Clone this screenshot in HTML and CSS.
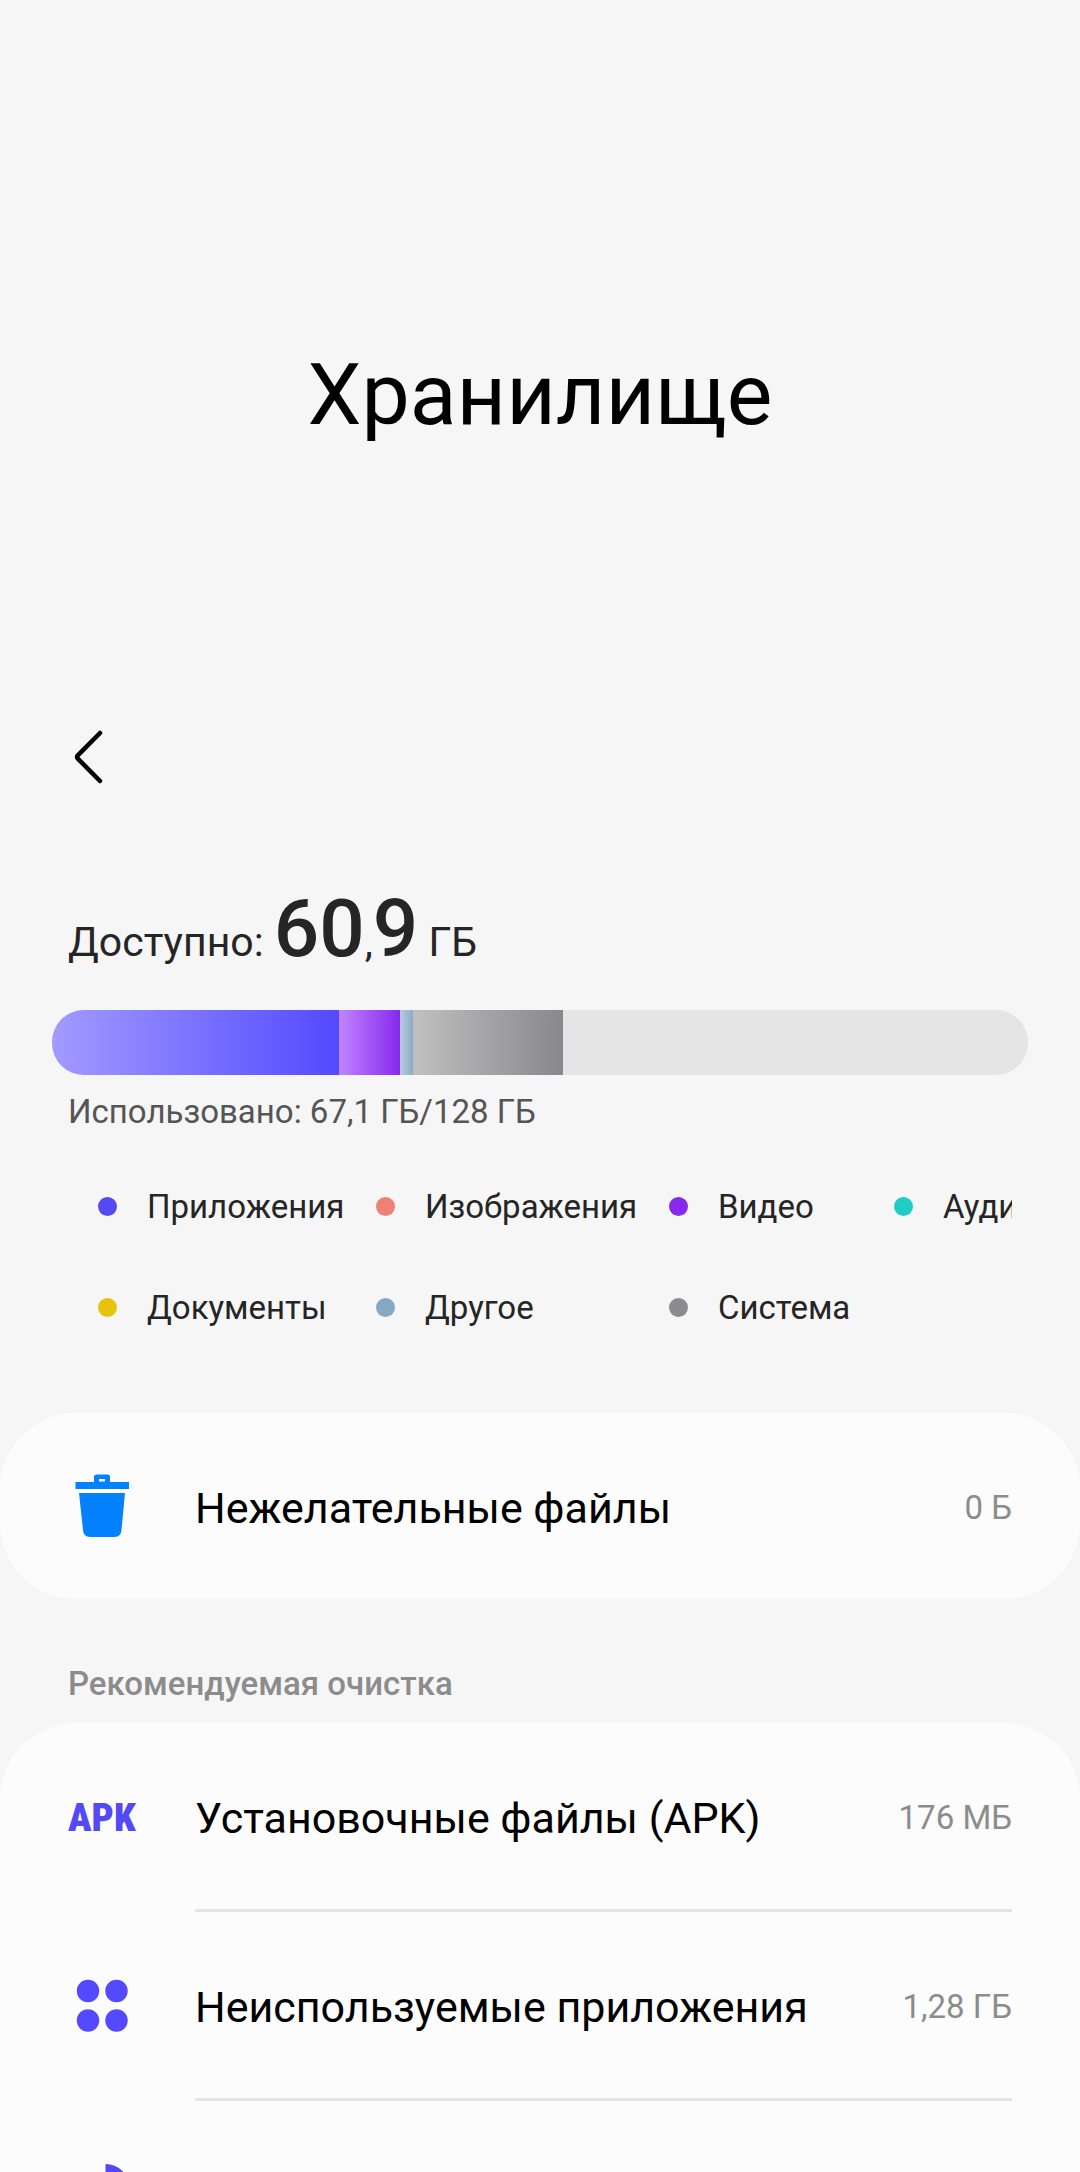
FILE: index.html
```html
<!DOCTYPE html>
<html lang="ru">
<head>
<meta charset="utf-8">
<meta name="viewport" content="width=device-width, initial-scale=1">
<title>Хранилище</title>
<link rel="stylesheet" href="styles.css">
</head>
<body>
<div class="screen">
  <header class="header">
    <h1 class="title">Хранилище</h1>
    <nav class="toolbar">
      <button class="back" type="button" aria-label="Назад">
        <svg width="40" height="64" viewBox="0 0 40 64" fill="none" stroke="#000" stroke-width="4.5" stroke-linecap="round" stroke-linejoin="round"><path d="M32 8 L9.8 30.4 Q8.2 32 9.8 33.6 L32 56"/></svg>
      </button>
    </nav>
  </header>

  <main>
    <section class="usage">
      <p class="available">Доступно: <strong class="amount">60<span class="comma">,</span>9</strong> ГБ</p>
      <div class="bar">
        <span class="part apps" style="width:29.4%"></span>
        <span class="part video" style="width:6.25%"></span>
        <span class="part other" style="width:1.35%"></span>
        <span class="part system" style="width:15.4%"></span>
      </div>
      <p class="used">Использовано: 67,1 ГБ/128 ГБ</p>
      <ul class="legend">
        <li class="key key-apps">Приложения</li>
        <li class="key key-images">Изображения</li>
        <li class="key key-video">Видео</li>
        <li class="key key-audio">Аудио</li>
        <li class="key key-docs">Документы</li>
        <li class="key key-other">Другое</li>
        <li class="key key-system">Система</li>
      </ul>
    </section>

    <section class="card">
      <a class="row" href="#junk">
        <span class="icon">
          <svg width="68" height="68" viewBox="0 0 68 68" fill="#0381fe"><path fill-rule="evenodd" d="M7.500 10 H26 V5 Q26 2.500 28.500 2.500 H39.500 Q42 2.500 42 5 V10 H61 V17 H7.500 Z M31 7 V9.500 H37 V7 Z"/><path d="M11 21 H57 L53.500 58 Q53 65 46.500 65 H22 Q15.500 65 15 58 Z"/></svg>
        </span>
        <span class="line"><span class="name">Нежелательные файлы</span><span class="size">0 Б</span></span>
      </a>
    </section>

    <h2 class="subtitle">Рекомендуемая очистка</h2>
    <section class="card card-last">
      <a class="row" href="#apk">
        <span class="icon"><span class="apk">APK</span></span>
        <span class="line"><span class="name">Установочные файлы (APK)</span><span class="size">176 МБ</span></span>
      </a>
      <a class="row" href="#unused">
        <span class="icon">
          <svg width="68" height="68" viewBox="0 0 68 68" fill="#5349ff"><circle cx="20" cy="20" r="11.200"/><circle cx="48.500" cy="20" r="11.200"/><circle cx="20" cy="49.500" r="11.200"/><circle cx="48.500" cy="49.500" r="11.200"/></svg>
        </span>
        <span class="line"><span class="name">Неиспользуемые приложения</span><span class="size">1,28 ГБ</span></span>
      </a>
      <a class="row" href="#large" aria-label="Большие файлы">
        <span class="icon">
          <svg width="68" height="68" viewBox="0 0 68 68" fill="#5349ff"><path d="M37.500 4 A24 24 0 0 1 61.500 28 H37.500 Z"/><path d="M31 14 V35 H52 A21 21 0 1 1 31 14 Z"/></svg>
        </span>
        <span class="line"></span>
      </a>
    </section>
  </main>
</div>
</body>
</html>
```
FILE: styles.css
```css
* {
  box-sizing: border-box;
}

body {
  margin: 0;
  background: #f6f6f6;
  color: #252525;
  font-family: Roboto, "Noto Sans", sans-serif;
}

h1, h2, p, ul {
  margin: 0;
  padding: 0;
}

.screen {
  height: 100vh;
  overflow: hidden;
}

/* Expanded app bar */
.title {
  padding: 345px 0 256px;
  color: #000;
  font-size: 86px;
  font-weight: 400;
  line-height: 100px;
  text-align: center;
}

.toolbar {
  display: flex;
  align-items: center;
  height: 112px;
  padding: 0 68px;
}

.back {
  display: flex;
  padding: 0;
  border: 0;
  background: none;
}

/* Storage usage */
.usage {
  padding: 68px 68px 55px;
}

.available {
  font-size: 41px;
  line-height: 48px;
}

.amount {
  font-size: 80px;
  font-weight: 500;
  line-height: 96px;
}

.comma {
  font-size: 41px;
  font-weight: 400;
  line-height: 48px;
}

.bar {
  display: flex;
  height: 65px;
  margin: 33px -16px 13px;
  overflow: hidden;
  border-radius: 32px;
  background: #e5e5e5;
}

.apps {
  background: linear-gradient(90deg, #a29bff, #5349ff);
}

.video {
  background: linear-gradient(90deg, #c084ff, #8729ee);
}

.other {
  background: linear-gradient(90deg, #b6cce0, #8cabc4);
}

.system {
  background: linear-gradient(90deg, #c0c0c0, #88888d);
}

.used {
  color: #555;
  font-size: 33px;
  line-height: 48px;
}

.legend {
  display: grid;
  grid-template-columns: 278px 293px 225px 1fr;
  grid-auto-rows: 101px;
  margin-top: 20px;
  padding-left: 30px;
  overflow: hidden;
  list-style: none;
}

.key {
  display: flex;
  align-items: center;
  gap: 30px;
  min-width: 0;
  font-size: 33px;
  line-height: 48px;
}

.key::before {
  content: "";
  flex: none;
  width: 19px;
  height: 19px;
  border-radius: 50%;
  background: currentColor;
}

.key-apps::before { background: #5349f5; }
.key-images::before { background: #f08074; }
.key-video::before { background: #8729ee; }
.key-audio::before { background: #20cdc4; }
.key-docs::before { background: #e8c30e; }
.key-other::before { background: #86a8c2; }
.key-system::before { background: #8b8b90; }

/* Lists */
.card {
  overflow: hidden;
  border-radius: 76px;
  background: #fcfcfc;
}

.card-last {
  border-radius: 76px 76px 0 0;
}

.row {
  display: flex;
  gap: 59px;
  padding: 0 68px;
  color: #000;
  text-decoration: none;
}

.icon {
  display: flex;
  flex: none;
  align-items: center;
  width: 68px;
  height: 186px;
}

.apk {
  padding-top: 4px;
  color: #5349f5;
  font-family: "Roboto Condensed", "Liberation Sans Narrow", Roboto, sans-serif;
  font-size: 39px;
  font-weight: 900;
}

.line {
  display: flex;
  flex: 1;
  align-items: center;
  justify-content: space-between;
  height: 186px;
  padding-top: 4px;
}

.row + .row .line,
.row + .row .icon {
  height: 189px;
}

.row + .row .line {
  border-top: 3px solid #e4e4e4;
}

.row + .row .icon {
  padding-top: 3px;
}

.name {
  font-size: 43px;
  line-height: 56px;
}

.size {
  color: #8c8c8c;
  font-size: 33px;
  line-height: 56px;
}

.subtitle {
  padding: 61px 68px 15px;
  color: #8c8c8c;
  font-size: 33px;
  font-weight: 500;
  line-height: 48px;
}
```
